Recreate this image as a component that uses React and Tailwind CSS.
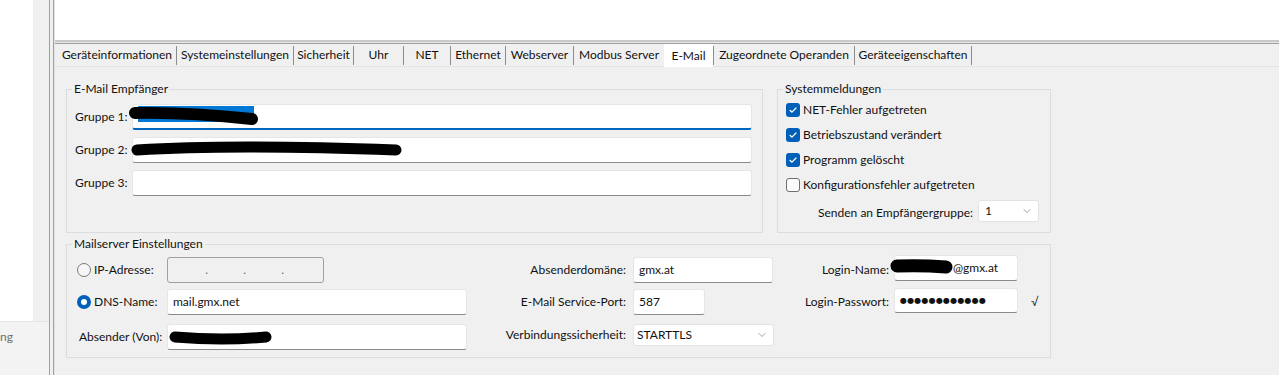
import React from "react";
import { ChevronDown } from "lucide-react";

const tabs = [
  { label: "Geräteinformationen", w: "w-[118px]", sep: true },
  { label: "Systemeinstellungen", w: "w-[116px]", sep: true },
  { label: "Sicherheit", w: "w-[59px]", sep: true },
  { label: "Uhr", w: "w-[49px]", sep: true },
  { label: "NET", w: "w-[46px]", sep: true },
  { label: "Ethernet", w: "w-[54px]", sep: true },
  { label: "Webserver", w: "w-[67px]", sep: true },
  { label: "Modbus Server", w: "w-[90px]", sep: false },
  { label: "E-Mail", w: "w-[49px]", sep: true, active: true },
  { label: "Zugeordnete Operanden", w: "w-[140px]", sep: true },
  { label: "Geräteeigenschaften", w: "w-[116px]", sep: true },
];

const Field = ({ className = "", focused = false, children }) => (
  <div
    className={`relative bg-white rounded-[3px] border border-[#e6e6e6] ${
      focused ? "border-b-2 border-b-[#0067c0]" : "border-b-[#8a8a8a]"
    } flex items-center pl-[5px] ${className}`}
  >
    {children}
  </div>
);

const Combo = ({ className = "", value }) => (
  <div
    className={`flex items-center justify-between bg-white rounded-[3px] border border-[#e3e3e3] pl-[3px] pr-[5px] ${className}`}
  >
    <span>{value}</span>
    <ChevronDown size={12} strokeWidth={1.2} className="text-[#5f5f5f]" />
  </div>
);

const Check = ({ checked, label }) => (
  <div className="h-[25px] flex items-center gap-[3px]">
    {checked ? (
      <span className="w-[14px] h-[14px] rounded-[3px] bg-[#005fb8] flex items-center justify-center">
        <svg width="10" height="10" viewBox="0 0 10 10">
          <path
            d="M2 5.3 4 7.2 8 3"
            fill="none"
            stroke="white"
            strokeWidth="1.2"
            strokeLinecap="round"
            strokeLinejoin="round"
          />
        </svg>
      </span>
    ) : (
      <span className="w-[14px] h-[14px] rounded-[3px] border border-[#6f6f6f] bg-[#fbfbfb]" />
    )}
    <span>{label}</span>
  </div>
);

const Radio = ({ checked, label }) => (
  <div className="flex items-center gap-[3px]">
    {checked ? (
      <span className="w-[14px] h-[14px] rounded-full bg-[#005fb8] flex items-center justify-center">
        <span className="w-[6px] h-[6px] rounded-full bg-white" />
      </span>
    ) : (
      <span className="w-[14px] h-[14px] rounded-full border border-[#7a7a7a] bg-[#f7f7f7]" />
    )}
    <span>{label}</span>
  </div>
);

// Schwärzung im Original-Screenshot
const Scribble = ({ className = "", d, w, h, sw = 12 }) => (
  <svg
    className={`absolute pointer-events-none ${className}`}
    width={w}
    height={h}
    viewBox={`0 0 ${w} ${h}`}
  >
    <path d={d} fill="none" stroke="#000" strokeWidth={sw} strokeLinecap="round" />
  </svg>
);

const Label = ({ className = "", children }) => (
  <div className={`flex items-center justify-end text-right ${className}`}>{children}</div>
);

const GroupBox = ({ title, className = "", children }) => (
  <fieldset className={`border border-[#dcdcdc] p-0 m-0 min-w-0 ${className}`}>
    <legend className="ml-[5px] px-[2px] leading-[16px]">{title}</legend>
    {children}
  </fieldset>
);

export default function App() {
  return (
    <div className="w-[1279px] h-[375px] overflow-hidden flex bg-[#f0f0f0] text-[12px] leading-[16px] text-[#111] font-['Lato','Liberation_Sans',sans-serif]">
      {/* linke Leiste */}
      <aside className="w-[49px] shrink-0 flex flex-col">
        <div className="h-[321px] flex">
          <div className="w-[33px] bg-white" />
          <div className="flex-1 bg-[#f0f0f0]" />
        </div>
        <div className="flex-1 border-t border-[#e5e5e5] bg-[#f3f3f3] pt-[7px] text-[#6e6e6e]">ng</div>
      </aside>
      <div className="w-px shrink-0 bg-[#a0a0a0]" />
      <div className="w-[3px] shrink-0 bg-[#f0f0f0]" />
      <div className="w-px shrink-0 bg-[#a0a0a0]" />

      <main className="flex-1 flex flex-col border-l border-[#e3e3e3]">
        <div className="h-[40px] bg-white" />
        <div className="h-[2px] bg-[#c8c8c8]" />
        <div className="h-px bg-[#e6e6e6]" />
        <div className="h-px bg-[#a0a0a0]" />

        {/* Reiter */}
        <div className="h-[22px] flex pl-[3px]">
          {tabs.map((t) => (
            <React.Fragment key={t.label}>
              <div
                className={`${t.w} shrink-0 flex items-center justify-center whitespace-nowrap ${
                  t.active ? "bg-white h-[23px] relative z-10" : ""
                }`}
              >
                {t.label}
              </div>
              {t.sep && <div className="w-px h-[19px] self-center shrink-0 bg-[#8c8c8c]" />}
            </React.Fragment>
          ))}
        </div>
        <div className="h-px bg-[#e3e3e3]" />

        <div className="flex flex-col px-[11px] pt-[14px]">
          <div className="flex gap-[14px]">
            <GroupBox title="E-Mail Empfänger" className="w-[697px] h-[152px]">
              <div className="flex flex-col gap-[7px] pl-[8px] pr-[10px] pt-[7px]">
                <div className="flex items-center">
                  <span className="w-[57px] shrink-0">Gruppe 1:</span>
                  <Field focused className="flex-1 h-[26px]">
                    <span className="absolute left-[5px] top-[1px] w-[116px] h-[16px] bg-[#0078d4]" />
                    <Scribble className="left-[-6px] top-0" w={134} h={24} d="M8 8 Q 60 7 125 14" />
                  </Field>
                </div>
                <div className="flex items-center">
                  <span className="w-[57px] shrink-0">Gruppe 2:</span>
                  <Field className="flex-1 h-[26px]">
                    <Scribble className="left-[-6px] top-0" w={280} h={24} d="M10 12 Q 104 6 269 12" sw={11} />
                  </Field>
                </div>
                <div className="flex items-center">
                  <span className="w-[57px] shrink-0">Gruppe 3:</span>
                  <Field className="flex-1 h-[26px]" />
                </div>
              </div>
            </GroupBox>

            <GroupBox title="Systemmeldungen" className="w-[274px] h-[152px]">
              <div className="flex flex-col pl-[8px]">
                <Check checked label="NET-Fehler aufgetreten" />
                <Check checked label="Betriebszustand verändert" />
                <Check checked label="Programm gelöscht" />
                <Check label="Konfigurationsfehler aufgetreten" />
                <div className="mt-[3px] flex items-center justify-end pr-[11px]">
                  <span className="mr-[5px] mt-[3px]">Senden an Empfängergruppe:</span>
                  <Combo className="w-[61px] h-[22px] pl-[6px]" value="1" />
                </div>
              </div>
            </GroupBox>
          </div>

          <GroupBox title="Mailserver Einstellungen" className="w-[985px] h-[122px] mt-[3px]">
            <div className="grid grid-cols-[90px_300px_166px_141px_120px_124px_1fr] grid-rows-[26px_26px_29px] gap-y-[6px] pl-[10px] pt-[5px]">
              <Radio label="IP-Adresse:" />
              <div className="w-[157px] h-[26px] rounded-[3px] border border-[#a0a0a0] bg-[#f0f0f0] flex pl-[2px] text-[#6e6e6e]">
                <span className="w-[38px] flex justify-end items-center">.</span>
                <span className="w-[38px] flex justify-end items-center">.</span>
                <span className="w-[38px] flex justify-end items-center">.</span>
              </div>
              <Label className="pr-[7px]">Absenderdomäne:</Label>
              <Field className="w-[140px]">gmx.at</Field>
              <Label className="pr-[5px]">Login-Name:</Label>
              <Field className="-mt-[2px] h-[26px]">
                <Scribble className="left-[-6px] top-0" w={64} h={22} d="M8 10 Q 32 9 57 11" sw={13} />
                <span className="inline-block w-[53px]" />
                @gmx.at
              </Field>
              <div />

              <Radio checked label="DNS-Name:" />
              <Field>mail.gmx.net</Field>
              <Label className="pr-[7px]">E-Mail Service-Port:</Label>
              <Field className="w-[72px]">587</Field>
              <Label className="pr-[5px]">Login-Passwort:</Label>
              <Field className="-mt-[1px] h-[25px]">
                <span className="font-['DejaVu_Sans',sans-serif] text-[8px] tracking-[0.2px]">●●●●●●●●●●●●</span>
              </Field>
              <div className="pl-[13px] flex items-center text-[#333]">√</div>

              <div className="mt-[3px] h-[26px] pl-[2px] flex items-center">Absender (Von):</div>
              <Field className="mt-[3px] h-[26px]">
                <Scribble className="left-0 top-0" w={110} h={26} d="M7 12 Q 55 16 98 12" sw={11} />
              </Field>
              <Label className="pr-[7px] mt-[3px] h-[22px]">Verbindungssicherheit:</Label>
              <Combo className="mt-[3px] h-[22px]" value="STARTTLS" />
              <div />
              <div />
              <div />
            </div>
          </GroupBox>
        </div>
      </main>
    </div>
  );
}
